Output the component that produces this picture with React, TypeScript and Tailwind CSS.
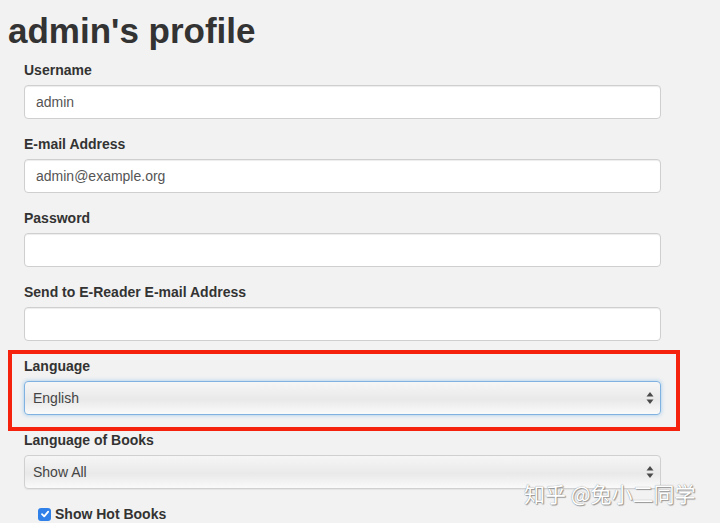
import React from 'react';

function Field({ label, value }: { label: string; value?: string }) {
  return (
    <div className="mb-[15px]">
      <div className="mb-[5px] text-[14px] leading-[20px] font-bold text-[#333]">{label}</div>
      <div className="h-[34px] rounded-[4px] border border-[#cfcfcf] bg-white px-[11px] text-[14px] leading-[32px] text-[#555] shadow-[inset_0_1px_1px_rgba(0,0,0,0.075)]">
        {value}
      </div>
    </div>
  );
}

function Arrows() {
  return (
    <svg width="8" height="14" viewBox="0 0 8 14" className="shrink-0">
      <path d="M4 1 L7.5 5.5 H0.5 Z" fill="#4a4a4a" />
      <path d="M4 13 L7.5 8.5 H0.5 Z" fill="#4a4a4a" />
    </svg>
  );
}

function SelectField({ label, value, focused }: { label: string; value: string; focused?: boolean }) {
  return (
    <div className="mb-[15px]">
      <div className="mb-[5px] text-[14px] leading-[20px] font-bold text-[#333]">{label}</div>
      <div
        className={`flex h-[34px] items-center justify-between rounded-[4px] border bg-[linear-gradient(to_bottom,#f6f6f6,#e9e9e9_55%,#fafafa)] pl-[8px] pr-[6px] text-[14px] text-[#444] ${
          focused
            ? 'border-[#7fb2e0] shadow-[0_0_4px_rgba(102,175,233,0.6)]'
            : 'border-[#d0d0d0] shadow-[0_1px_1px_rgba(0,0,0,0.06)]'
        }`}
      >
        <span>{value}</span>
        <Arrows />
      </div>
    </div>
  );
}

export default function App() {
  return (
    <div className="relative h-[523px] overflow-hidden bg-[#f2f2f2] font-['Liberation_Sans',Arial,sans-serif]">
      <h1 className="mt-[11px] mb-[9px] pl-[8px] text-[35px] leading-[40px] font-bold text-[#333]">admin's profile</h1>

      <div className="ml-[24px] w-[637px]">
        <Field label="Username" value="admin" />
        <Field label="E-mail Address" value="admin@example.org" />
        <Field label="Password" />
        <Field label="Send to E-Reader E-mail Address" />
        <SelectField label="Language" value="English" focused />
        <SelectField label="Language of Books" value="Show All" />

        <div className="mt-[16px] flex items-center gap-[4px] pl-[14px]">
          <span className="flex h-[13px] w-[13px] items-center justify-center rounded-[3px] bg-[#2f80e8]">
            <svg width="10" height="10" viewBox="0 0 10 10">
              <path d="M2 5.2 L4.2 7.4 L8.2 2.6" fill="none" stroke="white" strokeWidth="1.8" strokeLinecap="round" strokeLinejoin="round" />
            </svg>
          </span>
          <span className="text-[14px] leading-[18px] font-bold text-[#333]">Show Hot Books</span>
        </div>
      </div>

      {/* annotation box */}
      <div className="pointer-events-none absolute left-[8px] top-[350px] h-[81px] w-[672px] border-[4px] border-[#f5230e]" />

      {/* watermark */}
      <div className="pointer-events-none absolute left-[524px] top-[480px] font-['Noto_Sans_CJK_SC',sans-serif] text-[21px] leading-[26px] text-white [text-shadow:0_0_1px_#777,1px_1px_1px_#999]">
        知乎 @兔小二同学
      </div>
    </div>
  );
}
